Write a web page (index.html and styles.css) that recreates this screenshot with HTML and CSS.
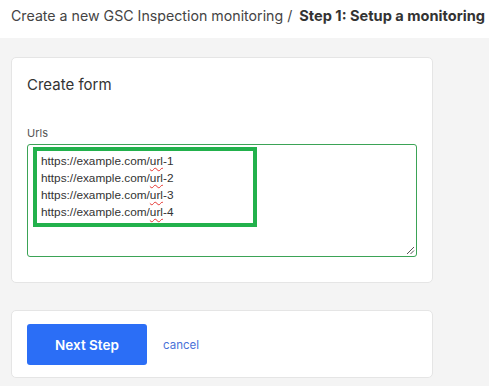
FILE: index.html
```html
<!DOCTYPE html>
<html lang="en">
<head>
    <meta charset="UTF-8">
    <meta name="viewport" content="width=device-width, initial-scale=1.0">
    <title>GSC Inspection monitoring</title>
    <link rel="stylesheet" href="styles.css">
</head>
<body>
    <div class="page-header">
        Create a new GSC Inspection monitoring /
        <span class="current-step">Step 1: Setup a monitoring</span>
    </div>

    <div class="container">
        <div class="card form-card">
            <h2>Create form</h2>
            <label class="field-label">Urls</label>
            <div class="url-input">
                <div class="highlight">
                    <div>https://example.com/<span class="typo">url</span>-1</div>
                    <div>https://example.com/<span class="typo">url</span>-2</div>
                    <div>https://example.com/<span class="typo">url</span>-3</div>
                    <div>https://example.com/<span class="typo">url</span>-4</div>
                </div>
                <svg class="resize-grip" width="9" height="9" viewBox="0 0 9 9">
                    <path d="M1 8 L8 1 M4.5 8 L8 4.5" stroke="#555" stroke-width="1" fill="none"/>
                </svg>
            </div>
        </div>

        <div class="card actions-card">
            <button class="btn-primary">Next Step</button>
            <a href="#" class="link-cancel">cancel</a>
        </div>
    </div>
</body>
</html>
```

FILE: styles.css
```css
:root {
    --primary: #2b6ef6;
    --green: #3ba356;
    --mark: #22b14c;
    --page-bg: #f4f4f4;
    --card-border: #e5e5e5;
}

body {
    margin: 0;
    background-color: var(--page-bg);
    font-family: Inter, 'Noto Sans', sans-serif;
    color: #333;
}

.page-header {
    background: white;
    height: 38px;
    box-sizing: border-box;
    padding: 6px 0 0 11px;
    font-size: 14.2px;
    line-height: 20px;
    color: #444;
    white-space: nowrap;
    overflow: hidden;
}

.current-step {
    font-size: 14.6px;
    font-weight: 700;
    color: #333;
    margin-left: 3px;
}

.container {
    padding: 19px 0 0 11px;
    width: 422px;
}

.card {
    background: white;
    border: 1px solid var(--card-border);
    border-radius: 5px;
}

.form-card {
    padding: 17px 15px 25px;
}

h2 {
    margin: 0;
    font-size: 15px;
    line-height: 20px;
    font-weight: 400;
    color: #333;
}

.field-label {
    display: block;
    margin-top: 32px;
    font-size: 11px;
    line-height: 13px;
    color: #555;
}

.url-input {
    position: relative;
    margin-top: 4px;
    height: 113px;
    box-sizing: border-box;
    border: 1px solid var(--green);
    border-radius: 3px;
    padding: 2px 0 0 5px;
}

/* annotation drawn over the textarea */
.highlight {
    width: 224px;
    height: 80px;
    box-sizing: border-box;
    border: 4px solid var(--mark);
    padding: 2px 4px;
    font-family: 'Liberation Sans', Arial, sans-serif;
    font-size: 11.8px;
    line-height: 17px;
    color: #333;
}

.typo {
    text-decoration: underline wavy #e53935;
    text-decoration-thickness: 1px;
    text-underline-offset: 2px;
}

.resize-grip {
    position: absolute;
    right: 1px;
    bottom: 1px;
}

.actions-card {
    margin-top: 27px;
    padding: 13px 15px 12px;
    display: flex;
    align-items: center;
}

.btn-primary {
    width: 120px;
    height: 41px;
    border: none;
    border-radius: 3px;
    background-color: var(--primary);
    color: white;
    font-family: Inter, sans-serif;
    font-size: 13.5px;
    font-weight: 600;
    cursor: pointer;
}

.link-cancel {
    margin-left: 16px;
    font-size: 11.5px;
    color: #4a72d8;
    text-decoration: none;
}
```
